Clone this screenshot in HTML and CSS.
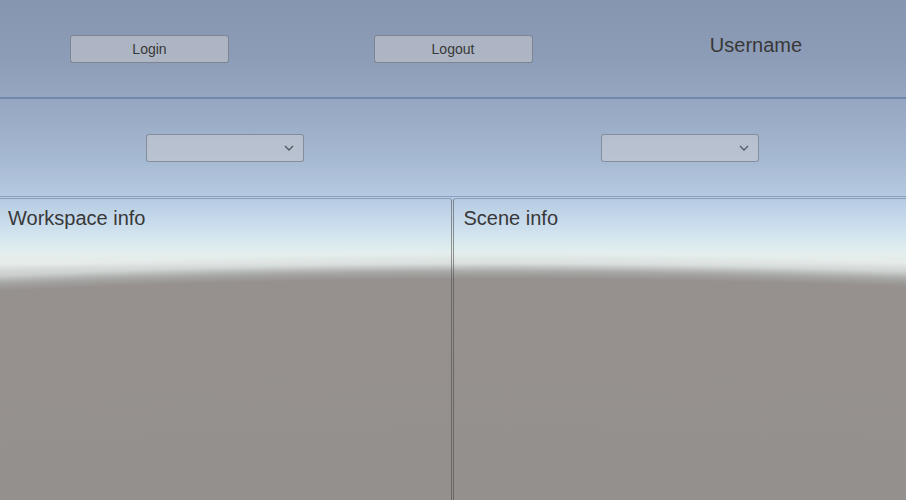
FILE: index.html
```html
<!DOCTYPE html>
<html lang="en">
<head>
    <meta charset="UTF-8">
    <meta name="viewport" content="width=device-width, initial-scale=1.0">
    <title>Workspace viewer</title>
    <link rel="stylesheet" href="styles.css">
</head>
<body>
    <div class="screen">
        <header class="bar account-bar">
            <div class="cell"><button class="ui-button">Login</button></div>
            <div class="cell"><button class="ui-button">Logout</button></div>
            <div class="cell"><span class="username">Username</span></div>
        </header>

        <div class="bar select-bar">
            <div class="cell">
                <div class="dropdown">
                    <svg class="chevron" width="10" height="6" viewBox="0 0 10 6"><polyline points="1,1 5,5 9,1" fill="none" stroke="#555a63" stroke-width="1.3"/></svg>
                </div>
            </div>
            <div class="cell">
                <div class="dropdown">
                    <svg class="chevron" width="10" height="6" viewBox="0 0 10 6"><polyline points="1,1 5,5 9,1" fill="none" stroke="#555a63" stroke-width="1.3"/></svg>
                </div>
            </div>
        </div>

        <main class="info">
            <section class="panel panel-left">Workspace info</section>
            <section class="panel panel-right">Scene info</section>
        </main>
    </div>
</body>
</html>
```

FILE: styles.css
```css
html, body {
    height: 100%;
}
body {
    margin: 0;
    font-family: "Liberation Sans", Arial, sans-serif;
    color: #383838;
    overflow: hidden;
    /* ground (curved horizon) over sky */
    background:
        radial-gradient(ellipse 2470px 600px at 500px 877px,
            #938f8c 0,
            #96918e 2462px,
            rgba(160, 160, 158, 0.85) 2491px,
            rgba(200, 205, 204, 0.45) 2525px,
            rgba(225, 235, 235, 0) 2565px),
        linear-gradient(to bottom,
            #8796b0 0,
            #8e9db7 60px,
            #98a9c4 110px,
            #a6b9d2 160px,
            #b7cce2 200px,
            #c8dbec 222px,
            #d6e8ee 240px,
            #e2eeed 252px,
            #e6ecea 264px,
            #c0c2c0 280px,
            #96918e 292px);
}
.screen {
    display: flex;
    flex-direction: column;
    height: 100%;
}

.bar {
    display: grid;
    align-items: center;
}
.account-bar {
    grid-template-columns: repeat(3, 1fr);
    height: 97px;
    border-bottom: 2px solid #7088ab;
}
.select-bar {
    grid-template-columns: repeat(2, 1fr);
    height: 97px;
    border-bottom: 1px solid rgba(110, 135, 170, 0.6);
    margin-bottom: 1px;
}
.cell {
    display: flex;
    justify-content: center;
    align-items: center;
}

.ui-button {
    width: 159px;
    height: 28px;
    padding: 0;
    font-family: "Liberation Sans", Arial, sans-serif;
    font-size: 14px;
    color: #383838;
    background: rgba(200, 202, 208, 0.55);
    border: 1px solid rgba(100, 106, 120, 0.65);
    border-radius: 3px;
}
.account-bar .cell:first-child .ui-button {
    margin-right: 3px;
}
.username {
    font-size: 20px;
    padding-bottom: 7px;
    margin-left: 2px;
}

.dropdown {
    width: 158px;
    height: 28px;
    box-sizing: border-box;
    display: flex;
    justify-content: flex-end;
    align-items: center;
    padding-right: 9px;
    background: rgba(200, 202, 208, 0.55);
    border: 1px solid rgba(100, 106, 120, 0.6);
    border-radius: 3px;
}
.select-bar .cell:first-child .dropdown {
    margin-right: 3px;
}
.chevron {
    display: block;
}

.info {
    flex: 1;
    display: flex;
    gap: 1px;
}
.panel {
    flex: 1;
    padding: 8px 8px 6px;
    font-size: 20px;
    border-top: 1px solid rgba(95, 115, 145, 0.5);
}
.panel-left {
    border-right: 1px solid rgba(75, 72, 70, 0.55);
    border-top-right-radius: 3px;
}
.panel-right {
    padding-left: 10px;
    border-left: 1px solid rgba(75, 72, 70, 0.55);
    border-top-left-radius: 3px;
}
```
